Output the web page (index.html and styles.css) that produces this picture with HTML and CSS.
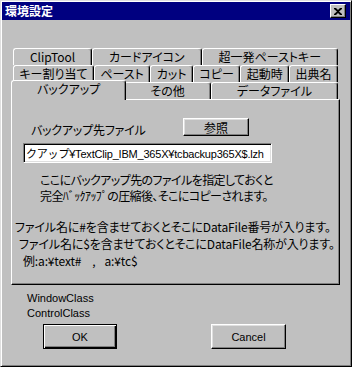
FILE: index.html
```html
<!DOCTYPE html>
<html lang="ja">
<head>
    <meta charset="UTF-8">
    <title>環境設定</title>
    <link rel="stylesheet" href="styles.css">
</head>
<body>
    <div class="window">
        <div class="titlebar">
            <span class="title">環境設定</span>
            <button class="close" type="button">
                <svg width="8" height="7" viewBox="0 0 8 7"><path d="M0 0h2l2 2 2-2h2v1L5 3.5 8 6v1H6L4 5 2 7H0V6l3-2.5L0 1z" fill="#000"/></svg>
            </button>
        </div>
        <div class="content">
            <div class="tabs">
                <div class="tab-row">
                    <div class="tab">ClipTool</div>
                    <div class="tab">カードアイコン</div>
                    <div class="tab">超一発ペーストキー</div>
                </div>
                <div class="tab-row">
                    <div class="tab">キー割り当て</div>
                    <div class="tab">ペースト</div>
                    <div class="tab">カット</div>
                    <div class="tab">コピー</div>
                    <div class="tab">起動時</div>
                    <div class="tab">出典名</div>
                </div>
                <div class="tab-row">
                    <div class="tab active">バックアップ</div>
                    <div class="tab">その他</div>
                    <div class="tab">データファイル</div>
                </div>
            </div>
            <div class="panel">
                <div class="file-row">
                    <label class="file-label" for="backup">バックアップ先ファイル</label>
                    <button class="btn btn-browse" type="button">参照</button>
                </div>
                <input class="file-input" id="backup" type="text" value="クアップ¥TextClip_IBM_365X¥tcbackup365X$.lzh">
                <p class="note">ここにバックアップ先のファイルを指定しておくと<br>完全ﾊﾞｯｸｱｯﾌﾟの圧縮後、そこにコピーされます。</p>
                <div class="info">
                    <div>ファイル名に#を含ませておくとそこにDataFile番号が入ります。</div>
                    <div class="indent-1">ファイル名に$を含ませておくとそこにDataFile名称が入ります。</div>
                    <div class="indent-2">例:a:¥text#<span class="sep">,</span>a:¥tc$</div>
                </div>
            </div>
            <div class="class-names">
                <div>WindowClass</div>
                <div>ControlClass</div>
            </div>
            <div class="actions">
                <button class="btn btn-default btn-ok" type="button">OK</button>
                <button class="btn btn-cancel" type="button">Cancel</button>
            </div>
        </div>
    </div>
</body>
</html>
```

FILE: styles.css
```css
body {
    margin: 0;
    font-family: "Noto Sans CJK JP", sans-serif;
    font-size: 12px;
    font-feature-settings: "palt";
    color: #000;
}
.window {
    width: 352px;
    height: 367px;
    box-sizing: border-box;
    background: #c0c0c0;
    border: 1px solid;
    border-color: #dfdfdf #000 #000 #dfdfdf;
    box-shadow: inset 1px 1px #fff, inset -1px -1px #808080;
    padding: 1px;
}
.titlebar {
    display: flex;
    align-items: center;
    height: 18px;
    background: #000080;
    color: #fff;
    padding-left: 3px;
}
.title {
    font-weight: bold;
    line-height: 16px;
}
.close {
    display: flex;
    align-items: center;
    justify-content: center;
    width: 16px;
    height: 14px;
    margin-left: auto;
    margin-right: 4px;
    padding: 0;
    background: #c0c0c0;
    border: 1px solid;
    border-color: #fff #000 #000 #fff;
    box-shadow: inset -1px -1px #808080;
}
.content {
    padding: 28px 10px 0 9px;
}

/* タブ */
.tabs {
    margin: 0 2px;
}
.tab-row {
    display: flex;
    height: 17px;
    align-items: flex-start;
}
.tab {
    flex: 1 1 auto;
    height: 17px;
    box-sizing: border-box;
    padding: 0 4px;
    border-top: 1px solid #fff;
    border-left: 1px solid #fff;
    border-right: 1px solid #000;
    border-radius: 3px 3px 0 0;
    box-shadow: inset -1px 0 #808080;
    background: #c0c0c0;
    line-height: 16px;
    text-align: center;
    white-space: nowrap;
}
.tab.active {
    position: relative;
    z-index: 1;
    height: 20px;
    margin: -2px -2px -1px -2px;
}

/* パネル */
.panel {
    height: 186px;
    box-sizing: border-box;
    border: 1px solid;
    border-color: #fff #000 #000 #fff;
    box-shadow: inset -1px -1px #808080;
    padding: 18px 0 0 3px;
    white-space: nowrap;
}
.file-row {
    display: flex;
    align-items: flex-start;
    height: 18px;
}
.file-label {
    margin: 4px 0 0 16px;
    line-height: 16px;
    letter-spacing: -0.2px;
}
.btn {
    padding: 0;
    font-family: inherit;
    font-size: 12px;
    color: #000;
    background: #c0c0c0;
    border: 1px solid;
    border-color: #fff #000 #000 #fff;
    box-shadow: inset -1px -1px #808080, inset 1px 1px #dfdfdf;
}
.btn-browse {
    width: 66px;
    height: 18px;
    margin: 0 90px 0 auto;
}
.file-input {
    display: block;
    width: 249px;
    height: 20px;
    box-sizing: border-box;
    margin: 7px 0 0 8px;
    padding: 0 2px;
    font-family: "Liberation Sans", "Noto Sans CJK JP", sans-serif;
    font-size: 11px;
    letter-spacing: -0.2px;
    background: #fff;
    border: 1px solid;
    border-color: #808080 #fff #fff #808080;
    box-shadow: inset 1px 1px #000, inset -1px -1px #dfdfdf;
    outline: none;
}
.note {
    margin: 9px 0 0 25px;
    line-height: 16px;
    letter-spacing: -0.6px;
}
.info {
    margin-top: 14px;
    line-height: 17px;
    letter-spacing: -0.15px;
}
.indent-1 { padding-left: 4px; }
.indent-2 { padding-left: 8px; }
.sep { margin: 0 9px 0 11px; }

.class-names {
    margin: 6px 0 0 16px;
    font-family: "Liberation Sans", sans-serif;
    font-size: 11px;
    line-height: 15px;
}
.actions {
    display: flex;
    margin-top: 3px;
}
.btn-ok,
.btn-cancel {
    font-family: "Liberation Sans", sans-serif;
    font-size: 11px;
    height: 25px;
}
.btn-ok {
    width: 74px;
    margin-left: 32px;
}
.btn-default {
    border-color: #000;
    box-shadow: inset 1px 1px #fff, inset -1px -1px #000, inset -2px -2px #808080;
}
.btn-cancel {
    width: 75px;
    margin-left: 94px;
}
```
